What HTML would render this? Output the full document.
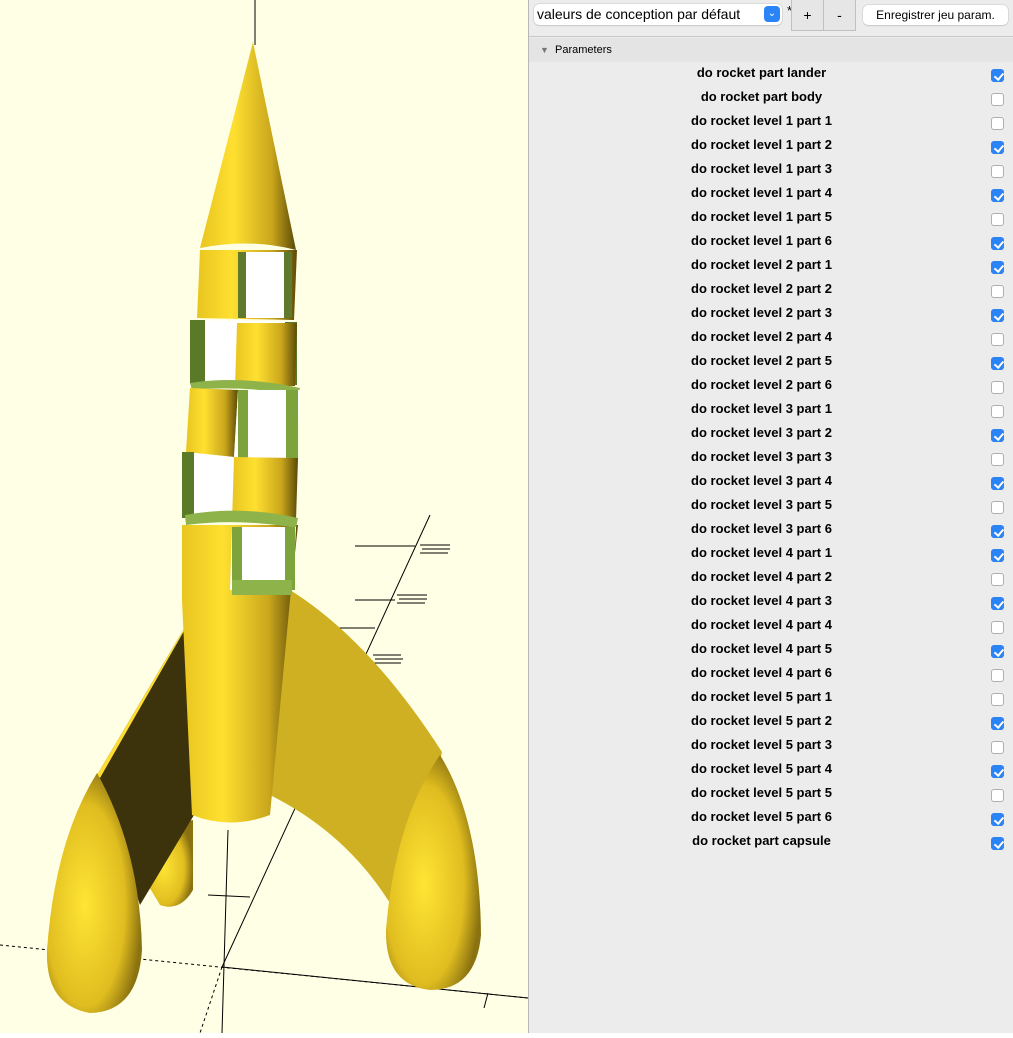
<!DOCTYPE html>
<html><head><meta charset="utf-8"><style>
html,body{margin:0;padding:0;width:1013px;height:1033px;overflow:hidden;font-family:"Liberation Sans",Arial,sans-serif}
#vp{position:absolute;left:0;top:0;width:528px;height:1033px;background:#ffffe5}
#panel{position:absolute;left:528px;top:0;width:485px;height:1033px;background:#ececec;border-left:1px solid #b8b8b8;box-sizing:border-box}
.sel{position:absolute;left:5px;top:4px;width:248px;height:21px;background:#fff;border-radius:5px;box-shadow:0 0 0 .5px #c8c8c8,0 1px 1px rgba(0,0,0,.15);font-size:14px;line-height:21px;padding-left:3px;box-sizing:border-box}
.sel .ar{position:absolute;right:2px;top:2px;width:16px;height:16px;border-radius:4px;background:#2a84f5;color:#fff;font-size:10px;line-height:16px;text-align:center}
.star{position:absolute;left:258px;top:3px;font-size:13px}
.pm{position:absolute;top:0;height:31px;width:33px;border:1px solid #c0c0c0;border-top:none;background:#e6e6e6;box-sizing:border-box;text-align:center;line-height:31px;font-size:14px}
.save{position:absolute;left:334px;top:5px;width:145px;height:20px;background:#fff;border-radius:5px;box-shadow:0 0 0 .5px #c8c8c8,0 1px 1px rgba(0,0,0,.15);font-size:12px;line-height:20px;text-align:center}
.sep{position:absolute;left:0;top:36px;width:485px;height:1px;background:#c8c8c8}
.hdr{position:absolute;left:0;top:38px;width:485px;height:24px;background:#e4e4e4;font-size:11px;line-height:24px}
.row{position:absolute;left:0;width:485px;height:24px}
.row .t{position:absolute;left:0;width:465px;text-align:center;font-size:13px;font-weight:bold;top:2px}
.cb{position:absolute;left:462px;top:6px;width:13px;height:13px;border-radius:3px;background:#fff;border:.5px solid #b0b0b0;box-sizing:border-box}
.cb.on{background:#2a84f5;border-color:#2a84f5}
.cb.on::after{content:"";position:absolute;left:3.5px;top:0.5px;width:3.5px;height:7px;border:solid #fff;border-width:0 2px 2px 0;transform:rotate(40deg)}
</style></head><body>
<div id="vp">
<svg width="528" height="1033" viewBox="0 0 528 1033">
<defs>
<linearGradient id="cyl" x1="0" x2="1"><stop offset="0" stop-color="#e8c520"/><stop offset=".35" stop-color="#ffe030"/><stop offset=".75" stop-color="#c9a61c"/><stop offset="1" stop-color="#5a4a08"/></linearGradient>
<linearGradient id="cyl2" x1="0" x2="1"><stop offset="0" stop-color="#d7b51c"/><stop offset=".5" stop-color="#c5a31a"/><stop offset="1" stop-color="#4a3c06"/></linearGradient>
<radialGradient id="pod" cx=".4" cy=".55" r=".6"><stop offset="0" stop-color="#ffe534"/><stop offset=".7" stop-color="#e0bd20"/><stop offset="1" stop-color="#8a7210"/></radialGradient>
</defs>
<g stroke="#000" stroke-width="1" fill="none">
<line x1="255" y1="0" x2="255" y2="45"/>
<line x1="0" y1="945" x2="528" y2="998" stroke-dasharray="3,3"/>
<line x1="222" y1="967" x2="528" y2="998"/>
<line x1="222" y1="967" x2="200" y2="1033" stroke-dasharray="3,3"/>
<line x1="222" y1="967" x2="430" y2="515"/>
<line x1="228" y1="830" x2="222" y2="1033"/>
<line x1="208" y1="895" x2="250" y2="897"/>
<line x1="488" y1="993" x2="484" y2="1008"/>
<path d="M420 545h30M422 549h28M420 553h28M397 595h30M399 599h28M397 603h28M373 655h28M375 659h28M373 663h28"/>
<path d="M355 546h60M355 600h40M335 628h40"/>
</g>
<!-- middle booster -->
<path d="M150 830 L193 820 L193 890 Q180 912 160 905 L145 880Z" fill="url(#pod)"/>
<!-- right fin -->
<path d="M290 590 Q370 640 442 752 L405 930 Q360 840 270 795 Z" fill="#cfb022"/>
<!-- left fin -->
<path d="M203 597 L203 800 L140 905 L97 775 Z" fill="#3c330d"/>
<path d="M203 597 L97 775 L100 778 L200 603Z" fill="#ffdc30"/>
<!-- body lower -->
<path d="M182 525 L298 525 L290 600 L270 815 Q230 830 192 815 L182 600Z" fill="url(#cyl)"/>
<!-- body bands -->
<path d="M200 250 L297 250 L294 320 L197 318Z" fill="url(#cyl)"/>
<rect x="238" y="252" width="46" height="66" fill="#fff"/>
<path d="M238 252h8v66h-8zM284 252h8v66h-8z" fill="#5f7a2c"/>
<path d="M195 320 L298 322 L297 385 L190 383Z" fill="#fff"/>
<path d="M190 320h15v63h-15zM285 322h12v63h-12z" fill="#5a7a28"/>
<path d="M237 323 L297 323 L295 386 L235 387Z" fill="url(#cyl)"/>
<path d="M190 383 Q240 375 300 388 L298 395 Q240 385 192 390Z" fill="#8db34a"/>
<path d="M190 388 L238 390 L234 457 L186 452Z" fill="url(#cyl)"/>
<path d="M238 390 L300 390 L296 458 L234 458Z" fill="#fff"/>
<path d="M238 390h10v68h-10zM286 390h12v68h-12z" fill="#7da43c"/>
<path d="M183 452 L234 457 L234 520 L182 518Z" fill="#fff"/>
<path d="M182 452h12v66h-12z" fill="#5a7a28"/>
<path d="M234 457 L298 458 L296 520 L232 522Z" fill="url(#cyl)"/>
<path d="M185 515 Q240 505 298 518 L296 528 Q240 518 186 525Z" fill="#8db34a"/>
<path d="M232 527 L296 527 L293 590 L230 590Z" fill="#fff"/>
<path d="M232 527h10v63h-10zM285 527h10v63h-10z" fill="#7da43c"/>
<path d="M232 580h60v15h-60z" fill="#8db34a"/>
<!-- nose -->
<path d="M253 42 L200 248 Q250 238 296 250 Z" fill="url(#cyl)"/>
<!-- pods -->
<path d="M97 773 Q140 850 142 950 Q138 1012 90 1013 Q45 1005 47 950 Q55 840 97 773Z" fill="url(#pod)"/>
<path d="M440 755 Q480 820 481 935 Q476 990 430 990 Q385 985 386 930 Q395 820 440 755Z" fill="url(#pod)"/>
</svg>
</div>
<div id="panel">
<div class="sel">valeurs de conception par défaut<div class="ar">⌄</div></div>
<div class="star">*</div>
<div class="pm" style="left:262px">+</div>
<div class="pm" style="left:294px">-</div>
<div class="save">Enregistrer jeu param.</div>
<div class="sep"></div>
<div class="hdr"><span style="color:#777;font-size:9px;margin-left:11px">▼</span>&nbsp;&nbsp;Parameters</div>
<div id="rows"></div>
</div>
<script>
var names=["do rocket part lander","do rocket part body"],on=[1,0];
for(var l=1;l<=5;l++)for(var p=1;p<=6;p++){names.push("do rocket level "+l+" part "+p);on.push(((l%2==1)?(p%2==0):(p%2==1))?1:0);}
names.push("do rocket part capsule");on.push(1);
var h="";for(var i=0;i<names.length;i++){h+='<div class="row" style="top:'+(63+i*24)+'px"><div class="t">'+names[i]+'</div><div class="cb'+(on[i]?' on':'')+'"></div></div>';}
document.getElementById("rows").innerHTML=h;
</script>
</body></html>
